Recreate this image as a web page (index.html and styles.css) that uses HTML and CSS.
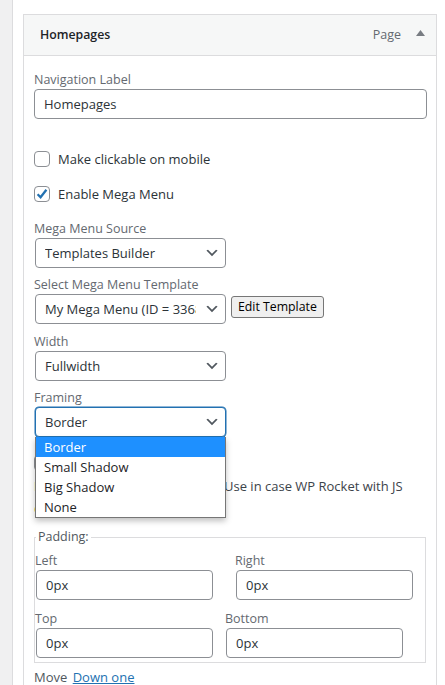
FILE: index.html
```html
<!DOCTYPE html>
<html>
<head>
<meta charset="utf-8">
<link rel="stylesheet" href="styles.css">
</head>
<body>
<div class="page">
  <div class="gutter"></div>
  <div class="main">
    <div class="card">
      <div class="card-head">
        <span class="title">Homepages</span>
        <span class="type">Page</span>
        <svg class="toggle" width="9" height="6" viewBox="0 0 9 6"><path d="M0 6 L4.5 0 L9 6 Z" fill="#787c82"/></svg>
      </div>
      <div class="card-body">
        <div class="field">
          <label class="lbl">Navigation Label</label>
          <div class="input wide">Homepages</div>
        </div>

        <div class="check-row first">
          <span class="box"></span>
          <span class="check-text">Make clickable on mobile</span>
        </div>
        <div class="check-row">
          <span class="box"><svg width="14" height="14" viewBox="0 0 14 14"><path d="M2.6 7.2 L5.6 10.2 L11.4 2.8" fill="none" stroke="#2271b1" stroke-width="2.3"/></svg></span>
          <span class="check-text">Enable Mega Menu</span>
        </div>

        <div class="field gap-lg">
          <label class="lbl">Mega Menu Source</label>
          <div class="select"><span class="sel-text">Templates Builder</span><svg class="chev" width="16" height="16" viewBox="0 0 20 20"><path d="M5 6l5 5 5-5 2 1-7 7-7-7 2-1z" fill="#50575e"/></svg></div>
        </div>

        <div class="field gap-sm">
          <label class="lbl">Select Mega Menu Template</label>
          <div class="select-row">
            <div class="select"><span class="sel-text">My Mega Menu (ID = 3368)</span><svg class="chev" width="16" height="16" viewBox="0 0 20 20"><path d="M5 6l5 5 5-5 2 1-7 7-7-7 2-1z" fill="#50575e"/></svg></div>
            <button class="btn">Edit Template</button>
          </div>
        </div>

        <div class="field gap-sm2">
          <label class="lbl">Width</label>
          <div class="select"><span class="sel-text">Fullwidth</span><svg class="chev" width="16" height="16" viewBox="0 0 20 20"><path d="M5 6l5 5 5-5 2 1-7 7-7-7 2-1z" fill="#50575e"/></svg></div>
        </div>

        <div class="field gap-sm">
          <label class="lbl">Framing</label>
          <div class="select-wrap">
            <div class="select focused"><span class="sel-text">Border</span><svg class="chev" width="16" height="16" viewBox="0 0 20 20"><path d="M5 6l5 5 5-5 2 1-7 7-7-7 2-1z" fill="#50575e"/></svg></div>
            <ul class="dropdown">
              <li class="opt active">Border</li>
              <li class="opt">Small Shadow</li>
              <li class="opt">Big Shadow</li>
              <li class="opt">None</li>
            </ul>
          </div>
        </div>

        <div class="check-row hidden-row">
          <span class="box"></span>
          <span class="check-text">Lazy load</span>
        </div>
        <div class="note">
          <div class="note-line"><span class="note-lead"><span class="warn">Note:</span> Load via AJAX.</span><span>Use in case WP Rocket with JS</span></div>
          <div class="note-line"><span class="note-lead"><span class="warn">delay</span> is enabled.</span></div>
        </div>

        <fieldset class="padding-set">
          <legend>Padding:</legend>
          <div class="pad-row">
            <div class="pad-field col-a"><label class="lbl">Left</label><div class="input small">0px</div></div>
            <div class="pad-field"><label class="lbl">Right</label><div class="input small">0px</div></div>
          </div>
          <div class="pad-row second">
            <div class="pad-field col-b"><label class="lbl">Top</label><div class="input small">0px</div></div>
            <div class="pad-field"><label class="lbl">Bottom</label><div class="input small">0px</div></div>
          </div>
        </fieldset>

        <div class="move">Move <a class="link" href="#">Down one</a></div>
      </div>
    </div>
  </div>
</div>
</body>
</html>
```

FILE: styles.css
```css
* { box-sizing: border-box; }
html, body { margin: 0; padding: 0; background: #fff; }
body {
  font-family: "Open Sans", "Noto Sans", "DejaVu Sans", sans-serif;
  font-size: 13px;
  color: #2c3338;
  height: 685px;
  overflow: hidden;
}
.page { display: flex; height: 685px; }
.gutter {
  width: 13px;
  flex: none;
  background: #f0f0f1;
  border-right: 1px solid #dcdcde;
}
.main { flex: none; padding: 14px 0 0 10px; }
.card {
  width: 414px;
  height: 700px;
  border: 1px solid #dcdcde;
  border-bottom: none;
  background: #fff;
}
.card-head {
  height: 41px;
  background: #f6f7f7;
  border-bottom: 1px solid #dcdcde;
  display: flex;
  align-items: center;
  padding: 0 11px 0 16px;
}
.title { font-weight: 600; font-size: 12.3px; color: #1d2327; flex: 1; margin-top: -1px; }
.type { color: #646970; font-size: 12.5px; margin-right: 15px; margin-top: -1px; }
.toggle { margin-top: -4px; }

.card-body { padding: 15px 0 0 10px; position: relative; }
.lbl {
  display: block;
  font-size: 12.5px;
  line-height: 18px;
  color: #646970;
}
.input {
  height: 30px;
  border: 1px solid #8c8f94;
  border-radius: 4px;
  padding: 0 9px;
  line-height: 28px;
  font-size: 13px;
  color: #2c3338;
  background: #fff;
}
.input.wide { width: 393px; }
.input.small { width: 177px; margin-left: 1px; height: 30px; }

.check-row { display: flex; align-items: center; height: 16px; margin-top: 19px; }
.check-row.first { margin-top: 32px; }
.box {
  width: 16px; height: 16px;
  border: 1px solid #8c8f94;
  border-radius: 4px;
  background: #fff;
  display: flex; align-items: center; justify-content: center;
  margin-right: 8px;
  flex: none;
}
.check-text { font-size: 13px; color: #2c3338; line-height: 16px; }

.field.gap-lg { margin-top: 18px; }
.field.gap-sm { margin-top: 8px; }
.field.gap-sm2 { margin-top: 9px; }

.select {
  width: 191px;
  height: 30px;
  border: 1px solid #8c8f94;
  border-radius: 4px;
  display: flex;
  align-items: center;
  padding: 0 5px 0 9px;
  background: #fff;
  margin-left: 1px;
}
.select.focused { border-color: #2271b1; box-shadow: 0 0 0 0.5px #2271b1; }
.sel-text {
  flex: 1;
  white-space: nowrap;
  overflow: hidden;
  font-size: 13px;
  color: #2c3338;
  margin-right: 8px;
}
.chev { flex: none; }
.select-row { display: flex; align-items: flex-start; }
.btn {
  margin: 2px 0 0 5px;
  height: 22px;
  padding: 0 6px;
  background: #efefef;
  border: 1px solid #767676;
  border-radius: 3px;
  font-family: "Open Sans", "Noto Sans", sans-serif;
  font-size: 12.3px;
  color: #000;
  line-height: 20px;
}

.select-wrap { position: relative; }
.dropdown {
  position: absolute;
  top: 30px;
  left: 1px;
  width: 191px;
  margin: 0;
  padding: 0;
  list-style: none;
  background: #fff;
  border: 1px solid #767676;
  border-top: none;
  box-shadow: 0 3px 6px rgba(0,0,0,0.25);
  z-index: 5;
}
.opt {
  height: 20px;
  line-height: 20px;
  padding-left: 8px;
  font-size: 13px;
  color: #1d2327;
}
.opt.active { background: #1e90ff; color: #fff; }

.hidden-row { margin-top: 18px; }
.note { margin: 4px 0 0; font-size: 13px; color: #3c434a; }
.note-line { display: flex; line-height: 22px; white-space: nowrap; }
.note-lead { width: 190px; flex: none; }
.warn { color: #dba617; }

.padding-set {
  margin: 10px 0 0;
  padding: 0 0 4px;
  width: 392px;
  border: 1px solid #dcdcde;
}
.padding-set legend {
  padding: 0 2px;
  margin-left: 1px;
  font-size: 12.5px;
  line-height: 16px;
  color: #50575e;
}
.pad-row { display: flex; margin-top: 7px; }
.pad-row.second { margin-top: 10px; }
.pad-field.col-a { width: 200px; }
.pad-field.col-b { width: 190px; }

.move { margin-top: 4px; line-height: 20px; font-size: 13px; color: #50575e; }
.link { color: #2271b1; text-decoration: underline; margin-left: 2px; }
```
